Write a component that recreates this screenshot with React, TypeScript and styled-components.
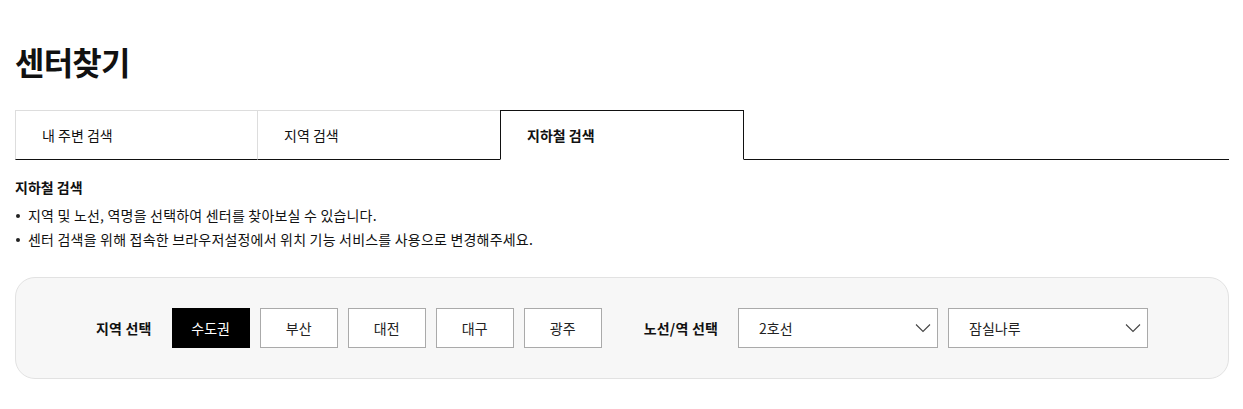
import React, { useState } from 'react'
import styled, { createGlobalStyle } from 'styled-components'

const GlobalStyle = createGlobalStyle`
  body {
    margin: 0;
    background: #fff;
    color: #111;
    font-family: "Noto Sans CJK KR", "Noto Sans", sans-serif;
  }
`

const Page = styled.div`
  padding: 39px 14px 0 15px;
`

const Title = styled.h1`
  margin: 0 0 26px;
  font-size: 32px;
  font-weight: 700;
  line-height: 45px;
  letter-spacing: -0.8px;
`

const TabList = styled.div`
  display: flex;
  border-bottom: 1px solid #111;
`

const Tab = styled.button<{ $active?: boolean }>`
  width: 244px;
  height: 50px;
  margin-bottom: -1px;
  padding: 0 0 0 26px;
  text-align: left;
  font-family: inherit;
  font-size: 14px;
  font-weight: ${p => (p.$active ? 700 : 400)};
  color: #111;
  background: #fff;
  cursor: pointer;
  border: 1px solid ${p => (p.$active ? '#111' : '#ddd')};
  border-bottom: 1px solid ${p => (p.$active ? '#fff' : '#111')};
  &:first-child {
    width: 243px;
  }
  & + & {
    margin-left: -1px;
  }
`

const Section = styled.div`
  padding-top: 16px;
`

const SubTitle = styled.h2`
  margin: 0 0 5px;
  font-size: 14px;
  font-weight: 700;
  line-height: 22px;
`

const Bullets = styled.ul`
  margin: 0;
  padding: 0;
  list-style: none;
`

const Bullet = styled.li`
  position: relative;
  padding-left: 13px;
  font-size: 14px;
  line-height: 24px;
  letter-spacing: 0.2px;
  &::before {
    content: '';
    position: absolute;
    left: 1px;
    top: 11px;
    width: 4px;
    height: 4px;
    border-radius: 50%;
    background: #222;
  }
`

const SearchBox = styled.div`
  margin-top: 26px;
  height: 102px;
  box-sizing: border-box;
  border: 1px solid #e2e2e2;
  border-radius: 20px;
  background: #f7f7f7;
  display: flex;
  align-items: center;
  justify-content: center;
  gap: 42px;
`

const Group = styled.div`
  display: flex;
  align-items: center;
  gap: 10px;
`

const Label = styled.span`
  font-size: 14px;
  font-weight: 700;
  letter-spacing: 0.2px;
  margin-right: 10px;
  white-space: nowrap;
`

const RegionButton = styled.button<{ $active?: boolean }>`
  width: 78px;
  height: 40px;
  font-family: inherit;
  font-size: 14px;
  cursor: pointer;
  color: ${p => (p.$active ? '#fff' : '#222')};
  background: ${p => (p.$active ? '#000' : '#fff')};
  border: 1px solid ${p => (p.$active ? '#000' : '#aaa')};
`

const Select = styled.div`
  width: 200px;
  height: 40px;
  box-sizing: border-box;
  border: 1px solid #aaa;
  background: #fff;
  display: flex;
  align-items: center;
  justify-content: space-between;
  padding: 0 6px 0 20px;
  font-size: 14px;
  color: #222;
  cursor: pointer;
`

const Chevron = () => (
  <svg width="16" height="10" viewBox="0 0 16 10" fill="none">
    <path d="M1 1.5l7 7 7-7" stroke="#444" strokeWidth="1.1" />
  </svg>
)

const tabs = ['내 주변 검색', '지역 검색', '지하철 검색']
const regions = ['수도권', '부산', '대전', '대구', '광주']

export default function App() {
  const [tab, setTab] = useState(2)
  const [region, setRegion] = useState(0)

  return (
    <>
      <GlobalStyle />
      <Page>
        <Title>센터찾기</Title>
        <TabList>
          {tabs.map((t, i) => (
            <Tab key={t} $active={i === tab} onClick={() => setTab(i)}>
              {t}
            </Tab>
          ))}
        </TabList>
        <Section>
          <SubTitle>지하철 검색</SubTitle>
          <Bullets>
            <Bullet>지역 및 노선, 역명을 선택하여 센터를 찾아보실 수 있습니다.</Bullet>
            <Bullet>센터 검색을 위해 접속한 브라우저설정에서 위치 기능 서비스를 사용으로 변경해주세요.</Bullet>
          </Bullets>
        </Section>
        <SearchBox>
          <Group>
            <Label>지역 선택</Label>
            {regions.map((r, i) => (
              <RegionButton key={r} $active={i === region} onClick={() => setRegion(i)}>
                {r}
              </RegionButton>
            ))}
          </Group>
          <Group>
            <Label>노선/역 선택</Label>
            <Select>
              2호선
              <Chevron />
            </Select>
            <Select>
              잠실나루
              <Chevron />
            </Select>
          </Group>
        </SearchBox>
      </Page>
    </>
  )
}
